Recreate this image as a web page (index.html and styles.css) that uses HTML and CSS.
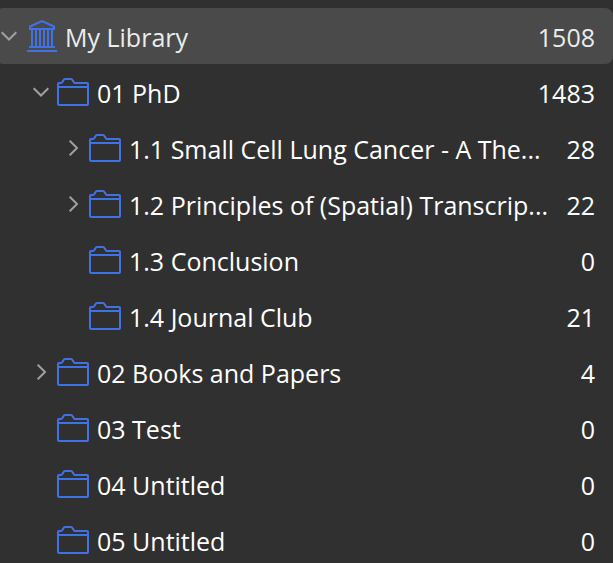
FILE: index.html
```
<!DOCTYPE html>
<html lang="en">
<head>
  <meta charset="UTF-8" />
  <meta name="viewport" content="width=device-width, initial-scale=1.0" />
  <title>My Library</title>
  <link rel="stylesheet" href="styles.css">
</head>
<body>
  <svg class="sprite" aria-hidden="true">
    <symbol id="open" viewBox="0 0 18 18">
      <path d="M1.7 5.2 L9 12.5 L16.3 5.2" />
    </symbol>
    <symbol id="closed" viewBox="0 0 18 18">
      <path d="M5.7 1.7 L13 9 L5.7 16.3" />
    </symbol>
    <symbol id="folder" viewBox="0 0 32 28">
      <path d="M1 9 V6 Q1 5 2 5 H4 Q5 5 5.4 4 L6.5 2 Q7 1 8 1 H14 Q15 1 15.5 2 L16.6 4 Q17 5 18 5 H30 Q31 5 31 6 V26 Q31 27 30 27 H2 Q1 27 1 26 V9 H31" />
    </symbol>
    <symbol id="library" viewBox="0 0 32 32">
      <path d="M5 9 V6.5 L17 1.2 L29 6.5 V9 Z M4 27 H30 M2 31 H32 M7 9 V27 M11 9 V27 M15 9 V27 M19 9 V27 M23 9 V27 M27 9 V27" />
    </symbol>
  </svg>

  <nav class="sidebar" aria-label="Collections">
    <ul class="tree">
      <li>
        <div class="row selected">
          <button class="twisty" aria-label="Collapse My Library" aria-expanded="true"><svg><use href="#open" /></svg></button>
          <svg class="icon library"><use href="#library" /></svg>
          <span class="name">My Library</span>
          <span class="count">1508</span>
        </div>
        <ul class="level-1">
          <li>
            <div class="row">
              <button class="twisty" aria-label="Collapse 01 PhD" aria-expanded="true"><svg><use href="#open" /></svg></button>
              <svg class="icon"><use href="#folder" /></svg>
              <span class="name">01 PhD</span>
              <span class="count">1483</span>
            </div>
            <ul class="level-2">
              <li class="row">
                <button class="twisty" aria-label="Expand 1.1" aria-expanded="false"><svg><use href="#closed" /></svg></button>
                <svg class="icon"><use href="#folder" /></svg>
                <span class="name">1.1 Small Cell Lung Cancer - A The...</span>
                <span class="count">28</span>
              </li>
              <li class="row">
                <button class="twisty" aria-label="Expand 1.2" aria-expanded="false"><svg><use href="#closed" /></svg></button>
                <svg class="icon"><use href="#folder" /></svg>
                <span class="name">1.2 Principles of (Spatial) Transcrip...</span>
                <span class="count">22</span>
              </li>
              <li class="row">
                <span class="twisty"></span>
                <svg class="icon"><use href="#folder" /></svg>
                <span class="name">1.3 Conclusion</span>
                <span class="count">0</span>
              </li>
              <li class="row">
                <span class="twisty"></span>
                <svg class="icon"><use href="#folder" /></svg>
                <span class="name">1.4 Journal Club</span>
                <span class="count">21</span>
              </li>
            </ul>
          </li>
          <li class="row">
            <button class="twisty" aria-label="Expand 02 Books and Papers" aria-expanded="false"><svg><use href="#closed" /></svg></button>
            <svg class="icon"><use href="#folder" /></svg>
            <span class="name">02 Books and Papers</span>
            <span class="count">4</span>
          </li>
          <li class="row">
            <span class="twisty"></span>
            <svg class="icon"><use href="#folder" /></svg>
            <span class="name">03 Test</span>
            <span class="count">0</span>
          </li>
          <li class="row">
            <span class="twisty"></span>
            <svg class="icon"><use href="#folder" /></svg>
            <span class="name">04 Untitled</span>
            <span class="count">0</span>
          </li>
          <li class="row">
            <span class="twisty"></span>
            <svg class="icon"><use href="#folder" /></svg>
            <span class="name">05 Untitled</span>
            <span class="count">0</span>
          </li>
        </ul>
      </li>
    </ul>
  </nav>
</body>
</html>
```
FILE: styles.css
```
* {
  box-sizing: border-box;
}
body {
  margin: 0;
  background-color: #303030;
  color: #fff;
  font-family: "Segoe UI", "Open Sans", sans-serif;
  font-size: 25px;
  line-height: 32px;
}
.sprite {
  display: none;
}
.sidebar {
  height: 100vh;
  padding-top: 8px;
  overflow: hidden;
}
ul {
  margin: 0;
  padding: 0;
  list-style: none;
}
.level-1, .level-2 {
  padding-left: 32px;
}
.row {
  display: flex;
  align-items: center;
  gap: 7px;
  height: 56px;
  padding-right: 18px;
}
.selected {
  background-color: #4a4a4a;
  color: #ececec;
  border-radius: 2px 8px 8px 2px;
}
.twisty {
  flex: none;
  width: 18px;
  height: 18px;
  padding: 0;
  border: none;
  background: none;
  color: #a0a0a0;
}
.twisty svg {
  display: block;
  width: 18px;
  height: 18px;
}
svg {
  fill: none;
  stroke: currentColor;
  stroke-width: 2;
}
.icon {
  flex: none;
  width: 32px;
  height: 28px;
  color: #4072e5;
}
.library {
  height: 32px;
}
.name {
  flex: 1;
  min-width: 0;
  padding-top: 2px;
  padding-left: 1px;
  overflow: hidden;
  white-space: nowrap;
}
.count {
  padding-top: 2px;
}
```
